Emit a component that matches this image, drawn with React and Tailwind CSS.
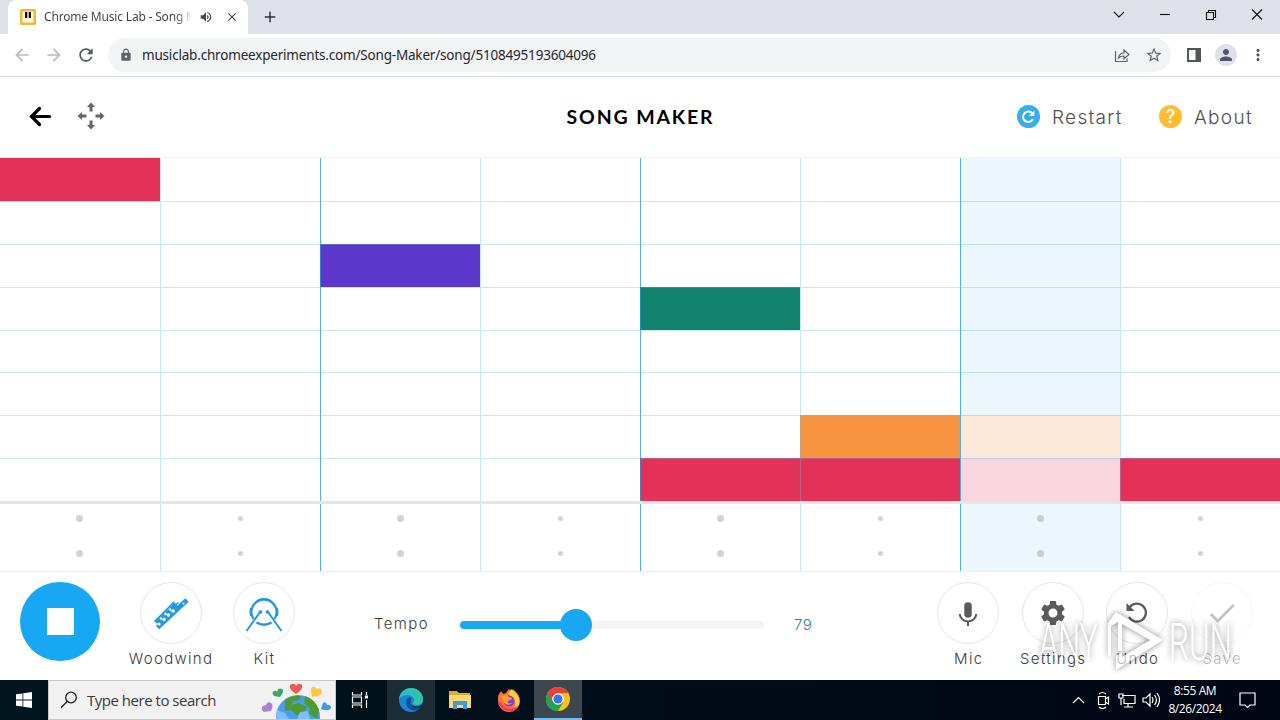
import clsx from "clsx";
import {
  MdArrowBack,
  MdArrowForward,
  MdRefresh,
  MdLock,
  MdStarBorder,
  MdPerson,
  MdMoreVert,
  MdVolumeUp,
  MdClose,
  MdAdd,
  MdSettings,
  MdCheck,
} from "react-icons/md";

const notes = [
  { row: 0, col: 0, color: "bg-[#e43158]" },
  { row: 2, col: 2, color: "bg-[#5b37cc]" },
  { row: 3, col: 4, color: "bg-[#11826d]" },
  { row: 6, col: 5, color: "bg-[#f99540]" },
  { row: 6, col: 6, color: "bg-[#fce8d7]" },
  { row: 7, col: 4, color: "bg-[#e43158]" },
  { row: 7, col: 5, color: "bg-[#e43158]" },
  { row: 7, col: 6, color: "bg-[#f9d5dd]" },
  { row: 7, col: 7, color: "bg-[#e43158]" },
];

const rows = [0, 1, 2, 3, 4, 5, 6, 7];
const cols = [0, 1, 2, 3, 4, 5, 6, 7];

const colBorder = (col) => {
  if (col === 0) return "";
  return col % 2 === 0 ? "border-l border-l-[#2398d0]/75" : "border-l border-l-[#5ebee4]/35";
};

const TabBar = () => (
  <div className="flex h-[34px] bg-[#dee1e8] pl-2">
    <div className="flex h-full w-[240px] items-center rounded-t-lg bg-white pl-3 pr-[9px]">
      <svg className="h-4 w-4 shrink-0" viewBox="0 0 16 16">
        <rect width="16" height="16" rx="1.5" fill="#f3b83b" />
        <rect x="2.5" y="2.5" width="11" height="11" fill="#fff8dc" />
        <path d="M5 3h2.3v6H5zM8.7 3H11v6H8.7z" fill="#111" />
      </svg>
      <div className="ml-2 w-[148px] overflow-hidden whitespace-nowrap bg-linear-to-r from-[#3c4043] from-90% to-[#3c4043]/10 bg-clip-text text-[12px] tracking-[-0.18px] text-transparent">
        Chrome Music Lab - Song M
      </div>
      <MdVolumeUp className="ml-2 h-[14px] w-[14px] shrink-0 text-[#45494d]" />
      <MdClose className="ml-3 h-[14px] w-[14px] shrink-0 text-[#45494d]" />
    </div>
    <MdAdd className="ml-[13px] mt-[8px] h-[18px] w-[18px] text-[#303338]" />
    <svg className="ml-auto mr-[16px] mt-[7px] h-4 w-[152px]" viewBox="0 0 152 16" fill="none" stroke="#111" strokeWidth="1.1">
      <path d="M2 5l5 5 5-5" />
      <path d="M48 7.5h10" />
      <path d="M94.5 5.5h7v7h-7zM96.5 5.5v-2h7v7h-2" />
      <path d="M140 2.5l10 10M150 2.5l-10 10" />
    </svg>
  </div>
);

const Toolbar = () => (
  <div className="flex h-[43px] items-center border-b border-[#d7d9dc] bg-white pl-3 pr-3">
    <MdArrowBack className="h-5 w-5 text-[#b9bbbe]" />
    <MdArrowForward className="ml-3 h-5 w-5 text-[#b9bbbe]" />
    <MdRefresh className="ml-3 h-5 w-5 text-[#55595e]" />
    <div className="ml-3 flex h-[34px] w-[1063px] items-center rounded-full bg-[#f1f3f4] pl-[11px] pr-[8px]">
      <MdLock className="h-[14px] w-[14px] text-[#5f6368]" />
      <span className="ml-[9px] whitespace-nowrap text-[13.5px] tracking-[-0.19px] text-[#25282c]">
        musiclab.chromeexperiments.com/Song-Maker/song/5108495193604096
      </span>
      <svg className="ml-auto h-4 w-4" viewBox="0 0 16 16" fill="none" stroke="#5f6368" strokeWidth="1.2">
        <path d="M1.5 4v10.5h11.5v-3" />
        <path d="M4.5 11c.5-3.5 2.5-5 5.5-5V3l5 4.500-5 4.200V9c-2.500 0-4 .5-5.500 2z" />
      </svg>
      <MdStarBorder className="ml-[15px] h-[18px] w-[18px] text-[#5f6368]" />
    </div>
    <svg className="ml-4 h-[14px] w-[14px]" viewBox="0 0 14 14">
      <path d="M0 0h14v14H0zM2 2v10h6.500V2z" fill="#53575c" fillRule="evenodd" />
    </svg>
    <div className="ml-[14px] flex h-[22px] w-[22px] items-center justify-center rounded-full bg-[#dee1e8]">
      <MdPerson className="h-[18px] w-[18px] text-[#50556a]" />
    </div>
    <MdMoreVert className="ml-[12px] h-[18px] w-[18px] text-[#4a4e53]" />
  </div>
);

const Header = () => (
  <header className="flex h-[81px] items-center border-b border-[#f2f2f2] bg-white pb-[2px] font-['Lato',sans-serif]">
    <div className="flex w-[427px] items-center pl-[29px]">
      <svg className="h-[22px] w-[23px]" viewBox="0 0 23 22" fill="none" stroke="#000" strokeWidth="3.2" strokeLinecap="round">
        <path d="M20.500 11.500H3M10.500 3.500L2.500 11.500l8 8" />
      </svg>
      <svg className="ml-[25px] h-[28px] w-[28px]" viewBox="0 0 28 28" fill="#666">
        <path id="arrow" d="M14 .5l4 4.500h-2.500v4.500h-3V5H10z" />
        <use href="#arrow" transform="rotate(90 14 14)" />
        <use href="#arrow" transform="rotate(180 14 14)" />
        <use href="#arrow" transform="rotate(270 14 14)" />
      </svg>
    </div>
    <h1 className="w-[427px] pt-[2px] text-center text-[19.5px] font-bold tracking-[1.85px] text-black">SONG MAKER</h1>
    <div className="flex flex-1 items-center justify-end pr-[26px] pt-[1px] font-['Inter',sans-serif] text-[19px] font-light text-[#505050]">
      <svg className="h-[23px] w-[23px]" viewBox="0 0 23 23">
        <circle cx="11.500" cy="11.500" r="11.500" fill="#35aeed" />
        <path d="M15.800 14.300a5.200 5.200 0 1 1-.2-5.400" fill="none" stroke="#fff" strokeWidth="2" />
        <path d="M17.400 5.500v5.600h-5.600z" fill="#fff" />
      </svg>
      <span className="ml-[12px] w-[72px] whitespace-nowrap pt-[3px] tracking-[1.3px]">Restart</span>
      <div className="ml-[35px] flex h-[23px] w-[23px] items-center justify-center rounded-full bg-[#fcbd2f] text-[18px] font-medium text-white">
        ?
      </div>
      <span className="ml-[12px] w-[60px] whitespace-nowrap pt-[3px] tracking-[1.3px]">About</span>
    </div>
  </header>
);

const NoteGrid = () => (
  <div className="grid h-[343px] grid-cols-8 grid-rows-8">
    {rows.map((row) =>
      cols.map((col) => {
        const note = notes.find((n) => n.row === row && n.col === col);
        return (
          <div
            key={`${row}-${col}`}
            className={clsx(
              note ? note.color : col === 6 ? "bg-[#ecf7fd]" : "bg-white",
              colBorder(col)
            )}
          >
            <div className={clsx("h-full", row > 0 && "border-t border-[#5ebee4]/35")} />
          </div>
        );
      })
    )}
  </div>
);

const BeatGrid = () => (
  <div className="grid h-[71px] grid-cols-8 border-b border-t-[3px] border-b-[#eeeeee] border-t-[#e3e5e7]">
    {cols.map((col) => (
      <div
        key={col}
        className={clsx("flex flex-col items-center gap-7 pr-px pt-[11px]", colBorder(col), col === 6 ? "bg-[#ecf7fd]" : "bg-white")}
      >
        {[0, 1].map((dot) => (
          <div key={dot} className="flex h-[7px] items-center">
            <div
              className={clsx("rounded-full", col % 2 === 0 ? "h-[7px] w-[7px]" : "h-[5px] w-[5px]", col === 6 ? "bg-[#c3cdd4]" : "bg-[#d3d3d3]")}
            />
          </div>
        ))}
      </div>
    ))}
  </div>
);

const ControlButton = ({ label, className, children }) => (
  <div className={clsx("flex flex-col items-center", className)}>
    <div className="flex h-[62px] w-[62px] items-center justify-center rounded-full border border-[#e5e5e5] bg-white">
      {children}
    </div>
    <span className="mt-[3px] whitespace-nowrap pl-px text-[15px] leading-6 tracking-[1.3px]">{label}</span>
  </div>
);

const Watermark = () => (
  <svg
    className="absolute left-[1030px] top-[32px] h-[72px] w-[220px] overflow-visible opacity-65 drop-shadow-[0_0_3px_rgba(0,0,0,0.7)]"
    viewBox="0 0 220 72"
    fill="#fff"
    fontFamily="Roboto, sans-serif"
    fontSize="51"
  >
    <text x="9" y="56" textLength="59" lengthAdjust="spacingAndGlyphs">ANY</text>
    <path d="M86 8l47 28-47 30V52l6-4v5l28-17-28-16v27h-4V18l-7 4v30h-3V19z" fillRule="evenodd" />
    <text x="139" y="56" textLength="63" lengthAdjust="spacingAndGlyphs">RUN</text>
  </svg>
);

const Controls = () => (
  <div className="relative flex h-[108px] bg-white pt-[10px] font-['Inter',sans-serif] font-light text-[#3c3c3c]">
    <div className="ml-5 flex h-[79px] w-[80px] items-center justify-center rounded-full bg-[#18a8f3]">
      <div className="h-[27px] w-[27px] bg-white" />
    </div>
    <div className="ml-[24px] flex">
      <ControlButton label="Woodwind" className="w-[93px]">
        <svg className="h-[36px] w-[36px]" viewBox="0 0 36 36">
          <path d="M4.500 32.500L34 5" stroke="#2399e5" strokeWidth="5" />
          <path d="M1.500 26.500L20.500 7.500v4l5-4M1.500 26.500h3" fill="none" stroke="#2399e5" strokeWidth="1.500" />
          <path d="M4.500 29L24 10" stroke="#2399e5" strokeWidth="7" />
          <g fill="#fff">
            <circle cx="6" cy="29" r="1.600" />
            <circle cx="11" cy="24.500" r="1.800" />
            <circle cx="15.500" cy="20" r="1.800" />
            <circle cx="20" cy="16" r="1.800" />
            <circle cx="30.500" cy="8.500" r="1" />
            <circle cx="8" cy="23.500" r="1.200" />
            <circle cx="12.500" cy="19" r="1.200" />
            <circle cx="17" cy="14.500" r="1.200" />
          </g>
        </svg>
      </ControlButton>
      <ControlButton label="Kit" className="w-[94px]">
        <svg className="mt-[4px] h-[34px] w-[38px]" viewBox="0 0 38 34" fill="none" stroke="#2399e5">
          <path d="M8.500 21a12.600 12.600 0 1 1 21 0" strokeWidth="2.200" />
          <path d="M11.500 24.500q7.500 4.500 15 0" strokeWidth="2.600" />
          <path d="M12 3.300q7-4 14 0M6.200 10q-1 4 0 8M31.800 10q1 4 0 8" strokeWidth="2.400" />
          <path d="M15 14L1.500 33M23 14L36.500 33" strokeWidth="2" />
          <circle cx="15.500" cy="14" r="1.400" fill="#2399e5" />
          <circle cx="22.500" cy="14" r="1.400" fill="#2399e5" />
        </svg>
      </ControlButton>
    </div>
    <div className="flex h-[84px] items-center pl-[63px]">
      <span className="w-[86px] text-[15px] tracking-[1.4px]">Tempo</span>
      <div className="flex h-8 w-[304px] items-center pt-[2px]">
        <div className="h-2 w-[104px] rounded-l-full bg-[#18a8f3]" />
        <div className="-ml-1 h-8 w-8 rounded-full bg-[#18a8f3]" />
        <div className="h-2 flex-1 rounded-r-full bg-[#f3f3f3]" />
      </div>
      <span className="ml-[30px] pt-[2px] text-[15px] tracking-[0.5px] text-[#1688c2]">79</span>
    </div>
    <div className="ml-auto mr-[16px] grid w-[338px] grid-cols-4">
      <ControlButton label="Mic">
        <svg className="mt-[2px] h-[26px] w-[20px]" viewBox="0 0 20 26" fill="none" stroke="#5a5a5a">
          <path d="M10 5v8" strokeWidth="7.500" strokeLinecap="round" />
          <path d="M1.800 13a8.200 7.500 0 0 0 16.400 0M10 20.500V25" strokeWidth="2" />
        </svg>
      </ControlButton>
      <ControlButton label="Settings">
        <MdSettings className="h-[30px] w-[30px] text-[#5a5a5a]" />
      </ControlButton>
      <ControlButton label="Undo">
        <svg className="h-[24px] w-[24px]" viewBox="0 0 24 24">
          <path d="M4.500 6.500A9 9 0 1 1 4 16" fill="none" stroke="#5a5a5a" strokeWidth="2.200" />
          <path d="M1.500 2v8h8z" fill="#5a5a5a" />
        </svg>
      </ControlButton>
      <ControlButton label="Save" className="opacity-35">
        <MdCheck className="h-[34px] w-[34px] text-[#555]" />
      </ControlButton>
    </div>
    <Watermark />
  </div>
);

const Globe = () => (
  <svg className="h-[38px] w-[72px]" viewBox="0 0 72 38">
    <circle cx="37" cy="36" r="22" fill="#4b9cf0" />
    <path d="M24 19q7-5 16-4l-2 4-6 1-2 4 8-2 8 4-4 7-7 1-5-5-6 1zM44 15q10 3 14 14l-2 9-8-5 1-6-6-5z" fill="#4c9b2b" />
    <path d="M16 29l8 3 4 6H15zM39 31l8-1 2 8H36z" fill="#83bcff" />
    <path d="M35 13l-5-4q-3-5 1-6 3-1 4 2 3-4 6-1 2 4-6 9z" fill="#ee5b4f" />
    <path d="M19 16l-6-1q-3-4 0-5 2-1 3 1 1-5 5-3 3 2-2 8z" fill="#38a95f" />
    <path d="M51 16l-1-7q0-4 4-3l2 2q4-2 5 2 1 5-10 6z" fill="#fac73f" />
    <path d="M10 30l-7 1q-4-3-1-6l3-1q1-4 5-2 3 2 0 8z" fill="#aa83d7" />
    <path d="M60 28l2-6q3-2 4 2 4-1 4 3-2 4-10 1z" fill="#3b9fdc" />
  </svg>
);

const Taskbar = () => (
  <div className="flex h-10 bg-linear-to-r from-[#00151e] to-[#000714] font-['Open_Sans',sans-serif] text-white">
    <div className="flex w-12 items-center justify-center">
      <svg className="h-4 w-4" viewBox="0 0 16 16" fill="#fff">
        <path d="M0 2.300L6.500 1.400v6.200H0zM7.300 1.300L16 0v7.600H7.300zM0 8.400h6.500v6.200L0 13.700zM7.300 8.400H16V16l-8.700-1.300z" />
      </svg>
    </div>
    <div className="flex w-[288px] items-center border border-[#c8c8c8] bg-[#f1f1f1] pl-[11px]">
      <svg className="h-[18px] w-[18px]" viewBox="0 0 18 18" fill="none" stroke="#222" strokeWidth="1.300">
        <circle cx="11" cy="6.500" r="5.300" />
        <path d="M7.200 10.500L1 16.700" />
      </svg>
      <span className="ml-[9px] whitespace-nowrap text-[15px] tracking-[-0.48px] text-[#3a3a3a]">Type here to search</span>
      <div className="ml-auto mr-[2px]">
        <Globe />
      </div>
    </div>
    <div className="flex w-[51px] items-center justify-center pr-[4px]">
      <svg className="h-4 w-[18px]" viewBox="0 0 18 16" fill="none" stroke="#fff" strokeWidth="1.200">
        <path d="M1.500 0v3h9V0M1.500 5h9v6h-9zM1.500 16v-3h9v3M15.500 0v3M15.500 8v8" />
        <path d="M14 5h3" strokeWidth="3" />
      </svg>
    </div>
    <div className="flex w-12 items-center justify-center bg-[#1b2c35]">
      <svg className="h-6 w-6" viewBox="0 0 24 24">
        <circle cx="12" cy="12" r="12" fill="#1687d4" />
        <path d="M0 11C1 4 6 0 12 0c8 0 12 6 12 11 0 4-3 6-7 6-3 0-4-1-3-2 3-4-1-8-5-8-4 0-8 2-9 4z" fill="#31c5a7" />
        <path d="M0 11c1-5 5-8 10-8 5 0 8 3 8 6-5-5-13-4-18 2z" fill="#27b6df" />
        <path d="M8 11c-3 6 2 13 10 11 2-1 4-3 4-4-5 3-11 0-11-4 0-2 1-3 2-4-2-1-4 0-5 1z" fill="#11509a" />
        <path d="M12 11c-2 3 0 6 3 7 3 1 6 0 8-2l1 2-2 1c-6 3-12-1-10-8z" fill="#1b2c35" />
      </svg>
    </div>
    <div className="flex w-[50px] items-center justify-center">
      <svg className="h-[20px] w-[22px]" viewBox="0 0 22 20">
        <path d="M0 1h8l2 2h11v5H0z" fill="#e6a52f" />
        <path d="M0 5h22v13H0z" fill="#fbd775" />
        <path d="M4 11h14v8h-4v-4H8v4H4z" fill="#3f9bd8" />
      </svg>
    </div>
    <div className="flex w-[49px] items-center justify-center pr-[2px]">
      <svg className="h-6 w-6" viewBox="0 0 24 24">
        <path d="M2 6l2-3 2 3 3-1 3-4 2 3 2-3c3 3 7 6 7 12 0 6-5 11-11 11S1 19 1 13c0-3 0-5 1-7z" fill="#ff7139" />
        <path d="M14 1c4 3 10 8 8 15-1 3-4 4-5 4 2-3 2-8-2-11l-4-3z" fill="#ffcc36" />
        <path d="M1 12c1 7 6 11 11 11 4 0 7-1 9-5-5 3-10 4-14 0-3-2-4-4-6-6z" fill="#f13765" />
        <circle cx="12" cy="13" r="5.500" fill="#7541d0" />
        <path d="M4 8c3-1 6-1 8 1l3 1c0 2-3 2-4 3-1 2 1 3 4 2-2 3-8 2-9-2z" fill="#ff9b2e" />
      </svg>
    </div>
    <div className="flex w-12 items-center justify-center border-b-2 border-[#76b9ed] bg-[#3b464e]">
      <svg className="h-6 w-6" viewBox="0 0 24 24">
        <circle cx="12" cy="12" r="12" fill="#fbc116" />
        <path d="M12 12L1.600 6A12 12 0 0 0 12 24l5.200-9z" fill="#20a453" />
        <path d="M1.600 6A12 12 0 0 1 22.400 6H12l-5.200 9z" fill="#e94235" />
        <circle cx="12" cy="12" r="5.800" fill="#fff" />
        <circle cx="12" cy="12" r="4.500" fill="#3478e5" />
      </svg>
    </div>
    <svg className="ml-auto mt-[11px] h-[18px] w-[88px]" viewBox="0 0 88 18" fill="none" stroke="#fff" strokeWidth="1.200">
      <path d="M1 12l5.500-5.500L12 12" />
      <path d="M26.500 5.500h7v8h-7zM33.500 8l3-2v7l-3-2M27 3q3.500-3 7 0M27 16q3.500 3 7 0" />
      <path d="M50 4.500h13v8H52V8M56 12.500v3.500M52 16h9M47 3h4v4h-4zM49 7v7" />
      <path d="M71 7h3l4-4v12l-4-4h-3zM80 6q2 3 0 6M82.500 4q4 5 0 10M85 2q5 7 0 14" />
    </svg>
    <div className="ml-[8px] flex w-[54px] flex-col items-center justify-center whitespace-nowrap text-[12px] leading-[18px] tracking-[-0.4px]">
      <span>8:55 AM</span>
      <span>8/26/2024</span>
    </div>
    <svg className="ml-[17px] mr-[24px] mt-[12px] h-[17px] w-[17px]" viewBox="0 0 17 17" fill="none" stroke="#fff" strokeWidth="1.200">
      <path d="M1 1h15v12h-5l-2.500 2.500L6 13H1z" />
    </svg>
  </div>
);

export default function App() {
  return (
    <div className="flex h-[720px] w-[1280px] flex-col overflow-hidden bg-white font-['Noto_Sans',sans-serif]">
      <TabBar />
      <Toolbar />
      <Header />
      <NoteGrid />
      <BeatGrid />
      <Controls />
      <Taskbar />
    </div>
  );
}
